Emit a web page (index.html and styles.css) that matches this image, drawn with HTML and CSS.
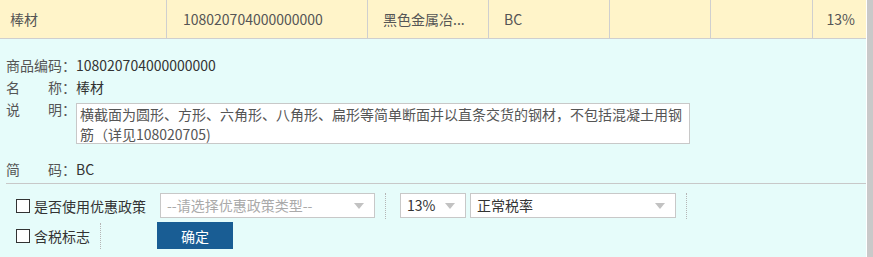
FILE: index.html
```html
<!DOCTYPE html>
<html lang="zh-CN">
<head>
    <meta charset="UTF-8" />
    <title>商品编码</title>
    <link rel="stylesheet" href="styles.css">
</head>
<body>
    <div class="page">
        <div class="main">
            <div class="grid-row">
                <div class="cell c1">棒材</div>
                <div class="cell c2">108020704000000000</div>
                <div class="cell c3">黑色金属冶...</div>
                <div class="cell c4">BC</div>
                <div class="cell c5"></div>
                <div class="cell c6"></div>
                <div class="cell c7">13%</div>
            </div>

            <div class="detail">
                <div class="info">
                    <div class="line">
                        <span class="lbl lbl-plain">商品编码</span><span class="colon">：</span>
                        <span class="val">108020704000000000</span>
                    </div>
                    <div class="line">
                        <span class="lbl">名称</span><span class="colon">：</span>
                        <span class="val">棒材</span>
                    </div>
                    <div class="line line-top">
                        <span class="lbl">说明</span><span class="colon">：</span>
                        <div class="memo">横截面为圆形、方形、六角形、八角形、扁形等简单断面并以直条交货的钢材，不包括混凝土用钢筋（详见108020705)</div>
                    </div>
                    <div class="line line-short">
                        <span class="lbl">简码</span><span class="colon">：</span>
                        <span class="val">BC</span>
                    </div>
                </div>

                <div class="options">
                    <div class="opt-row">
                        <label class="check"><span class="box"></span>是否使用优惠政策</label>
                        <div class="select sel-policy placeholder">--请选择优惠政策类型--<i class="arrow"></i></div>
                        <span class="sep"></span>
                        <div class="select sel-rate">13%<i class="arrow"></i></div>
                        <div class="select sel-type">正常税率<i class="arrow"></i></div>
                        <span class="sep"></span>
                    </div>
                    <div class="opt-row opt-row2">
                        <label class="check"><span class="box"></span>含税标志</label>
                        <span class="sep sep2"></span>
                        <button type="button" class="btn">确定</button>
                    </div>
                </div>
            </div>
        </div>
        <div class="scrollbar"></div>
    </div>
</body>
</html>
```

FILE: styles.css
```css
html, body {
    margin: 0;
    padding: 0;
}

body {
    font-family: "Noto Sans CJK SC", "Liberation Sans", sans-serif;
    font-size: 14px;
    color: #333;
    background: #fff;
}

.page {
    display: flex;
    width: 873px;
    height: 257px;
    overflow: hidden;
}

.main {
    width: 866px;
    display: flex;
    flex-direction: column;
}

.scrollbar {
    width: 6px;
    border-left: 1px solid #fff;
    background: #c9c9c9;
}

/* top row */
.grid-row {
    display: flex;
    height: 38px;
    background: #fff4c9;
    border-bottom: 1px solid #cfcfcf;
    color: #555;
}

.cell {
    box-sizing: border-box;
    height: 38px;
    line-height: 38px;
    border-right: 1px solid #cfcfcf;
    white-space: nowrap;
    overflow: hidden;
}

.c1 { width: 167px; padding-left: 10px; }
.c2 { width: 201px; padding-left: 16px; }
.c3 { width: 121px; padding-left: 15px; }
.c4 { width: 121px; padding-left: 15px; }
.c5 { width: 101px; }
.c6 { width: 102px; }
.c7 { flex: 1; border-right: none; text-align: right; padding-right: 11px; }

/* detail */
.detail {
    flex: 1;
    background: #e6fcfa;
}

.info {
    margin-left: 6px;
    padding-top: 15px;
    padding-bottom: 3px;
    border-bottom: 1px solid #c8c8c8;
}

.line {
    display: flex;
    align-items: flex-start;
    line-height: 22px;
}

.line-short {
    margin-top: 14px;
}

.lbl {
    width: 56px;
    color: #555;
    text-align: justify;
    text-align-last: justify;
}

.colon {
    width: 14px;
    color: #555;
}

.val {
    color: #333;
}

.memo {
    box-sizing: border-box;
    width: 614px;
    height: 41px;
    margin-top: 5px;
    padding: 0 3px;
    background: #fff;
    border: 1px solid #c8c8c8;
    color: #555;
    line-height: 20px;
}

/* options */
.options {
    padding: 8px 0 0 16px;
}

.opt-row {
    display: flex;
    align-items: center;
    height: 27px;
}

.opt-row2 {
    margin-top: 3px;
}

.check {
    display: flex;
    align-items: center;
    color: #333;
    width: 144px;
}

.box {
    box-sizing: border-box;
    width: 14px;
    height: 14px;
    border: 1px solid #333;
    background: #fff;
    margin-right: 4px;
}

.select {
    position: relative;
    box-sizing: border-box;
    height: 25px;
    line-height: 23px;
    padding-left: 6px;
    background: #fff;
    border: 1px solid #c8c8c8;
    color: #333;
    white-space: nowrap;
}

.placeholder {
    color: #aaa;
}

.arrow {
    position: absolute;
    right: 10px;
    top: 9px;
    width: 0;
    height: 0;
    border-left: 5px solid transparent;
    border-right: 5px solid transparent;
    border-top: 6px solid #c2c2c2;
}

.sel-policy { width: 215px; }
.sel-rate { width: 66px; margin-right: 4px; }
.sel-type { width: 206px; }

.sep {
    height: 26px;
    border-left: 1px dotted #b5b5b5;
    margin: 0 14px 0 10px;
}

.sep2 {
    margin: 0 56px 0 -60px;
}

.btn {
    width: 76px;
    height: 27px;
    border: none;
    background: #195d94;
    color: #fff;
    font-family: inherit;
    font-size: 14px;
    cursor: pointer;
}
```
